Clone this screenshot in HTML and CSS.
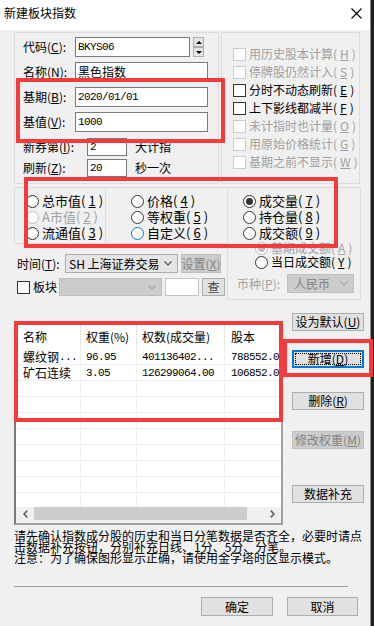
FILE: index.html
```html
<!DOCTYPE html>
<html lang="zh-CN">
<head>
<meta charset="utf-8">
<title>新建板块指数</title>
<link rel="stylesheet" href="styles.css">
</head>
<body>
<div class="window">
  <div class="titlebar">
    <span class="title">新建板块指数</span>
    <svg class="close" width="11" height="11" viewBox="0 0 11 11"><path d="M0.5 0.5L10.5 10.5M10.5 0.5L0.5 10.5" stroke="#000" stroke-width="1.1" fill="none"/></svg>
  </div>
  <div class="content">
    <div class="top">
      <div class="group g-left">
        <div class="frow">
          <span class="lbl">代码(<u>C</u>):</span>
          <div class="edit w115 mono">BKYS06</div>
          <div class="spin"><span class="sb"><i class="tri-up"></i></span><span class="sb"><i class="tri-dn"></i></span></div>
        </div>
        <div class="frow gap5">
          <span class="lbl">名称(<u>N</u>):</span>
          <div class="edit w133">黑色指数</div>
        </div>
        <div class="frow gap5">
          <span class="lbl">基期(<u>B</u>):</span>
          <div class="edit w133 mono">2020/01/01</div>
        </div>
        <div class="frow gap5">
          <span class="lbl">基值(<u>V</u>):</span>
          <div class="edit w133 mono">1000</div>
        </div>
        <div class="frow small r5">
          <span class="lbl wide">新券第(<u>I</u>):</span>
          <div class="edit w40 mono">2</div>
          <span class="after">大计指</span>
        </div>
        <div class="frow small r6">
          <span class="lbl wide">刷新(<u>Z</u>):</span>
          <div class="edit w40 mono">20</div>
          <span class="after">秒一次</span>
        </div>
      </div>
      <div class="group g-right">
        <div class="cbrow dis"><span class="cb"></span>用历史股本计算(<u>H</u>)</div>
        <div class="cbrow dis"><span class="cb"></span>停牌股仍然计入(<u>S</u>)</div>
        <div class="cbrow"><span class="cb"></span>分时不动态刷新(<u>E</u>)</div>
        <div class="cbrow"><span class="cb"></span>上下影线都减半(<u>F</u>)</div>
        <div class="cbrow dis"><span class="cb"></span>未计指时也计量(<u>O</u>)</div>
        <div class="cbrow dis"><span class="cb"></span>用原始价格统计(<u>G</u>)</div>
        <div class="cbrow dis"><span class="cb"></span>基期之前不显示(<u>W</u>)</div>
      </div>
    </div>

    <div class="mid">
      <div class="mid-left">
        <div class="radios">
          <div class="group gA">
            <div class="rrow"><span class="rd"></span>总市值(<u>1</u>)</div>
            <div class="rrow dis"><span class="rd"></span>A市值(<u>2</u>)</div>
            <div class="rrow"><span class="rd"></span>流通值(<u>3</u>)</div>
          </div>
          <div class="group gB">
            <div class="rrow"><span class="rd"></span>价格(<u>4</u>)</div>
            <div class="rrow"><span class="rd"></span>等权重(<u>5</u>)</div>
            <div class="rrow"><span class="rd hot"></span>自定义(<u>6</u>)</div>
          </div>
        </div>
        <div class="frow time">
          <span class="lbl tl">时间(<u>T</u>):</span>
          <div class="combo w113"><span>SH 上海证券交易</span><svg width="8" height="5" viewBox="0 0 8 5"><path d="M0.5 0.5L4 4L7.5 0.5" stroke="#555" stroke-width="1.2" fill="none"/></svg></div>
          <div class="btn dis w40h19">设置(<u>X</u>)</div>
        </div>
        <div class="frow board">
          <span class="cb"></span>
          <span class="blbl">板块</span>
          <div class="combo dis w103"><span></span><svg width="8" height="5" viewBox="0 0 8 5"><path d="M0.5 0.5L4 4L7.5 0.5" stroke="#a8a8a8" stroke-width="1.2" fill="none"/></svg></div>
          <div class="sedit"></div>
          <div class="btn cha">查</div>
        </div>
      </div>
      <div class="group gC">
        <div class="rrow"><span class="rd on"></span>成交量(<u>7</u>)</div>
        <div class="rrow"><span class="rd"></span>持仓量(<u>8</u>)</div>
        <div class="rrow"><span class="rd"></span>成交额(<u>9</u>)</div>
        <div class="rrow sub dis"><span class="rd on"></span>基期成交额(<u>A</u>)</div>
        <div class="rrow sub"><span class="rd"></span>当日成交额(<u>Y</u>)</div>
        <div class="frow cur">
          <span class="clbl">币种(<u>P</u>):</span>
          <div class="combo dis w67"><span>人民币</span><svg width="8" height="5" viewBox="0 0 8 5"><path d="M0.5 0.5L4 4L7.5 0.5" stroke="#a8a8a8" stroke-width="1.2" fill="none"/></svg></div>
        </div>
      </div>
    </div>

    <div class="tablerow">
      <div class="grid">
        <div class="thead">
          <div class="th c1">名称</div><div class="th c2">权重(%)</div><div class="th c3">权数(成交量)</div><div class="th c4">股本</div>
        </div>
        <div class="tbody">
          <div class="tr"><div class="td c1">螺纹钢<span class="mono">...</span></div><div class="td c2 mono">96.95</div><div class="td c3 mono">401136402...</div><div class="td c4 mono">788552.00</div></div>
          <div class="tr"><div class="td c1">矿石连续</div><div class="td c2 mono">3.05</div><div class="td c3 mono">126299064.00</div><div class="td c4 mono">106852.00</div></div>
          <div class="tr"><div class="td c1"></div><div class="td c2"></div><div class="td c3"></div><div class="td c4"></div></div>
          <div class="tr"><div class="td c1"></div><div class="td c2"></div><div class="td c3"></div><div class="td c4"></div></div>
          <div class="tr"><div class="td c1"></div><div class="td c2"></div><div class="td c3"></div><div class="td c4"></div></div>
          <div class="tr"><div class="td c1"></div><div class="td c2"></div><div class="td c3"></div><div class="td c4"></div></div>
          <div class="tr"><div class="td c1"></div><div class="td c2"></div><div class="td c3"></div><div class="td c4"></div></div>
          <div class="tr"><div class="td c1"></div><div class="td c2"></div><div class="td c3"></div><div class="td c4"></div></div>
          <div class="tr"><div class="td c1"></div><div class="td c2"></div><div class="td c3"></div><div class="td c4"></div></div>
          <div class="tr"><div class="td c1"></div><div class="td c2"></div><div class="td c3"></div><div class="td c4"></div></div>
        </div>
        <div class="hscroll">
          <span class="arr"><svg width="5" height="8" viewBox="0 0 5 8"><path d="M4.2 0.6L1 4L4.2 7.4" stroke="#606060" stroke-width="1.6" fill="none"/></svg></span>
          <span class="thumb"></span>
          <span class="sgap"></span>
          <span class="arr"><svg width="5" height="8" viewBox="0 0 5 8"><path d="M0.8 0.6L4 4L0.8 7.4" stroke="#606060" stroke-width="1.6" fill="none"/></svg></span>
        </div>
      </div>
      <div class="btncol">
        <div class="btn">设为默认(<u>U</u>)</div>
        <div class="btn def b2">新增(<u>D</u>)</div>
        <div class="btn b3">删除(<u>R</u>)</div>
        <div class="btn dis b4">修改权重(<u>M</u>)</div>
        <div class="btn b5">数据补充</div>
      </div>
    </div>

    <p class="note">请先确认指数成分股的历史和当日分笔数据是否齐全，必要时请点<br>击数据补充按钮，分别补充日线、1分、5分、分笔。<br>注意：为了确保图形显示正确，请使用金字塔时区显示模式。</p>
    <div class="sep"></div>
    <div class="okrow">
      <div class="btn okb">确定</div>
      <div class="btn okb w71">取消</div>
    </div>
  </div>
</div>
<div class="mark m1"></div>
<div class="mark m2"></div>
<div class="mark m3"></div>
<div class="mark m4"></div>
</body>
</html>
```

FILE: styles.css
```css
* { box-sizing: border-box; }
html, body { margin: 0; padding: 0; }
body {
  position: relative;
  width: 374px;
  height: 626px;
  overflow: hidden;
  background: #1f1f1f;
  font-family: "Noto Sans CJK SC", "Liberation Sans", sans-serif;
  font-size: 12px;
  line-height: 14px;
  color: #000;
}
u { text-decoration: underline; text-underline-offset: 1px; }

.window {
  width: 371px;
  height: 626px;
  background: #f0f0f0;
  border-right: 1px solid #8a8a8a;
  overflow: hidden;
}
.titlebar {
  height: 30px;
  background: #fff;
  display: flex;
  align-items: center;
  justify-content: space-between;
  padding: 0 8px 4px 4px;
}
.title { font-size: 12px; }
.close { display: block; }

.content { padding: 2px 0 0 14px; }
.top { display: flex; gap: 2px; }
.group { border: 1px solid #dcdcdc; }
.g-left { width: 205px; height: 152px; padding: 4px 0 0 8px; }
.g-right { width: 139px; height: 152px; padding: 12px 0 0 11px; }

.frow { display: flex; align-items: center; height: 20px; white-space: nowrap; }
.gap5 { margin-top: 5px; }
.lbl { width: 52px; flex-shrink: 0; white-space: nowrap; }
.lbl.wide { width: 64px; }
.edit {
  height: 20px;
  background: #fff;
  border: 1px solid #7a7a7a;
  display: flex;
  align-items: center;
  padding-left: 2px;
  white-space: nowrap;
  overflow: hidden;
  flex-shrink: 0;
}
.w115 { width: 115px; }
.w133 { width: 133px; }
.w40 { width: 40px; }
.mono { font-family: "Liberation Mono", monospace; font-size: 11px; letter-spacing: -0.6px; }
.frow.small { height: 18px; }
.frow.small .edit { height: 18px; }
.r5 { margin-top: 6px; }
.r6 { margin-top: 3px; }
.after { margin-left: 8px; }

.spin { margin-left: 3px; width: 11px; height: 20px; display: flex; flex-direction: column; justify-content: space-between; }
.sb { height: 10px; background: #e5e5e5; border: 1px solid #adadad; display: flex; align-items: center; justify-content: center; }
.tri-up { width: 0; height: 0; border-left: 3px solid transparent; border-right: 3px solid transparent; border-bottom: 3px solid #000; }
.tri-dn { width: 0; height: 0; border-left: 3px solid transparent; border-right: 3px solid transparent; border-top: 3px solid #000; }

.cbrow { display: flex; align-items: center; gap: 3px; height: 18px; white-space: nowrap; }
.cb { width: 13px; height: 13px; border: 1px solid #333; background: #fff; flex-shrink: 0; }
.dis { color: #a0a0a0; }
.cbrow.dis .cb { border-color: #cccccc; }

.mid { display: flex; margin-top: 3px; }
.mid-left { width: 213px; }
.radios { display: flex; height: 57px; }
.gA { width: 92px; height: 57px; padding: 5px 0 0 11px; }
.gB { width: 121px; height: 57px; border-left: none; border-right: none; padding: 5px 0 0 25px; }
.gC { width: 134px; height: 113px; padding: 5px 0 0 15px; }
.rrow { display: flex; align-items: center; gap: 3px; height: 16px; font-size: 13px; white-space: nowrap; }
.rrow.sub { height: 14px; font-size: 12px; margin-left: 12px; }
.rd { width: 13px; height: 13px; border-radius: 50%; border: 1px solid #333; background: #fff; flex-shrink: 0; position: relative; }
.rd.on::after { content: ""; position: absolute; left: 2px; top: 2px; width: 7px; height: 7px; border-radius: 50%; background: #333; }
.rrow.dis .rd { border-color: #bcbcbc; }
.rrow.dis .rd.on::after { background: #bcbcbc; }
.rd.hot { border-color: #0078d7; }

.time { margin-top: 10px; padding-left: 3px; height: 19px; }
.lbl.tl { width: 48px; }
.combo {
  height: 19px;
  border: 1px solid #acacac;
  background: #e5e5e5;
  display: flex;
  align-items: center;
  justify-content: space-between;
  padding: 0 5px 0 3px;
  white-space: nowrap;
  flex-shrink: 0;
}
.combo.dis { background: #cccccc; border-color: #bfbfbf; color: #838383; }
.w113 { width: 113px; }
.w103 { width: 103px; height: 18px; }
.w67 { width: 67px; padding-left: 6px; }

.board { margin-top: 5px; padding-left: 3px; height: 18px; }
.blbl { width: 26px; margin-left: 3px; }
.sedit { width: 34px; height: 18px; margin-left: 3px; background: #fff; border: 1px solid #c4c4c4; }
.cur { margin-top: 5px; margin-left: -6px; height: 19px; }
.clbl { width: 50px; color: #a0a0a0; }

.btn {
  width: 72px;
  height: 18px;
  border: 1px solid #adadad;
  background: #e1e1e1;
  display: flex;
  align-items: center;
  justify-content: center;
  font-size: 12px;
  line-height: 1;
  white-space: nowrap;
  color: #000;
  position: relative;
  flex-shrink: 0;
}
.btn.def { border: 2px solid #0078d7; }
.btn.def::after { content: ""; position: absolute; left: 1px; top: 1px; right: 1px; bottom: 1px; border: 1px dotted #000; }
.btn.dis { background: #cccccc; border-color: #bfbfbf; color: #838383; }
.w40h19 { width: 40px; height: 19px; margin-left: 3px; }
.cha { width: 23px; margin-left: 3px; color: #444; }

.tablerow { display: flex; align-items: flex-start; margin-top: 13px; }
.grid {
  margin-top: 8px;
  width: 269px;
  height: 204px;
  border: 2px solid;
  border-color: #7a7a7a #a0a0a0 #a0a0a0 #7a7a7a;
  background: #fff;
  display: flex;
  flex-direction: column;
  overflow: hidden;
}
.thead, .tr { display: flex; flex-shrink: 0; }
.thead { height: 26px; }
.th { height: 26px; display: flex; align-items: center; border-right: 1px solid #e5e5e5; white-space: nowrap; padding-top: 2px; flex-shrink: 0; }
.c1 { width: 65px; padding-left: 7px; flex-shrink: 0; }
.c2 { width: 56px; padding-left: 5px; flex-shrink: 0; }
.c3 { width: 88px; padding-left: 5px; flex-shrink: 0; }
.c4 { width: 100px; padding-left: 6px; flex-shrink: 0; }
.tbody { height: 158px; overflow: hidden; flex-shrink: 0; }
.tr { height: 16px; border-bottom: 1px solid #f0f0f0; }
.td { height: 15px; border-right: 1px solid #f0f0f0; display: flex; align-items: center; white-space: nowrap; overflow: hidden; }
.hscroll { height: 16px; background: #f0f0f0; display: flex; align-items: flex-start; flex-shrink: 0; }
.arr { width: 18px; height: 13px; display: flex; align-items: center; justify-content: center; }
.hscroll .arr:last-child { width: 17px; }
.thumb { width: 213px; height: 13px; background: #cdcdcd; }
.sgap { width: 17px; }

.btncol { margin-left: 9px; width: 72px; display: flex; flex-direction: column; }
.b2 { margin-top: 19px; }
.b3 { margin-top: 24px; }
.b4 { margin-top: 21px; }
.b5 { margin-top: 36px; }

.note { margin: 5px 0 0; font-size: 12px; line-height: 11px; white-space: nowrap; }
.sep { margin-top: 23px; width: 334px; height: 1px; background: #a0a0a0; }
.okrow { margin-top: 10px; display: flex; gap: 14px; padding-left: 187px; }
.okb { height: 19px; }
.w71 { width: 71px; }

.mark { position: absolute; border: 4px solid #f53b3b; }
.m1 { left: 16px; top: 78px; width: 209px; height: 65px; }
.m2 { left: 24px; top: 177px; width: 314px; height: 71px; }
.m3 { left: 14px; top: 321px; width: 269px; height: 101px; }
.m4 { left: 283px; top: 339px; width: 90px; height: 38px; }
```
